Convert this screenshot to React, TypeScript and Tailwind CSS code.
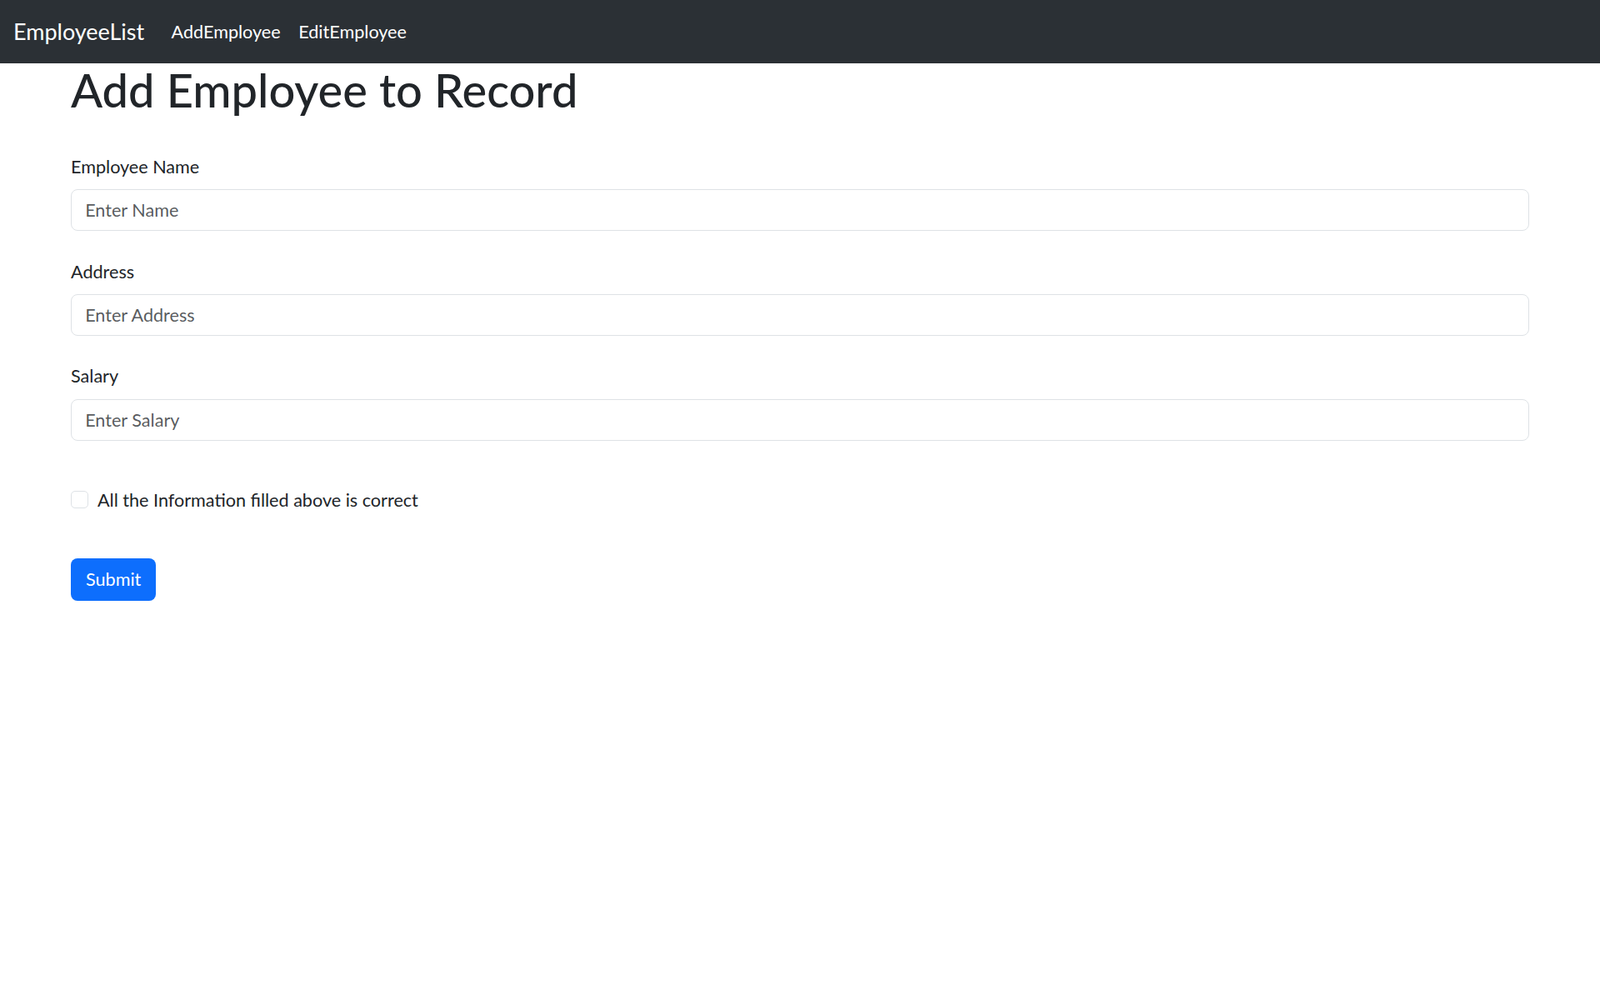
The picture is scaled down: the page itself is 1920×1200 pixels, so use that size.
export default function App() {
  const fields = [
    { label: 'Employee Name', placeholder: 'Enter Name' },
    { label: 'Address', placeholder: 'Enter Address' },
    { label: 'Salary', placeholder: 'Enter Salary' },
  ];

  return (
    <div className="min-h-screen bg-white text-[#212529] font-['Lato','Noto_Sans',sans-serif] text-[21.6px] leading-[1.5]">
      <nav className="h-[76px] bg-[#2b3035] flex items-center px-[16px]">
        <a href="#" className="text-white text-[27px] leading-[40px] mr-[21.6px]">
          EmployeeList
        </a>
        <div className="flex">
          {['AddEmployee', 'EditEmployee'].map((link) => (
            <a key={link} href="#" className="text-white px-[10.8px] py-[10.8px]">
              {link}
            </a>
          ))}
        </div>
      </nav>

      <div className="w-[1750px] mx-auto">
        <h1 className="text-[56px] leading-[1.2] font-medium -mt-[2px] mb-[43px]">Add Employee to Record</h1>

        <form onSubmit={(e) => e.preventDefault()}>
          {fields.map((f) => (
            <div key={f.label} className="mb-[32.4px]">
              <label className="block mb-[10.8px]">{f.label}</label>
              <input
                type="text"
                placeholder={f.placeholder}
                className="block w-full h-[50px] px-[16.2px] border border-[#dee2e6] rounded-[8px] placeholder:text-[#212529bf] outline-none"
              />
            </div>
          ))}

          <div className="flex items-center gap-[11px] mt-[55px] mb-[54px]">
            <input type="checkbox" className="appearance-none w-[21px] h-[21px] border border-[#dee2e6] rounded-[5px] bg-white" />
            <label>All the Information filled above is correct</label>
          </div>

          <button type="submit" className="bg-[#0d6efd] text-white h-[51px] px-[18px] rounded-[8px]">
            Submit
          </button>
        </form>
      </div>
    </div>
  );
}
